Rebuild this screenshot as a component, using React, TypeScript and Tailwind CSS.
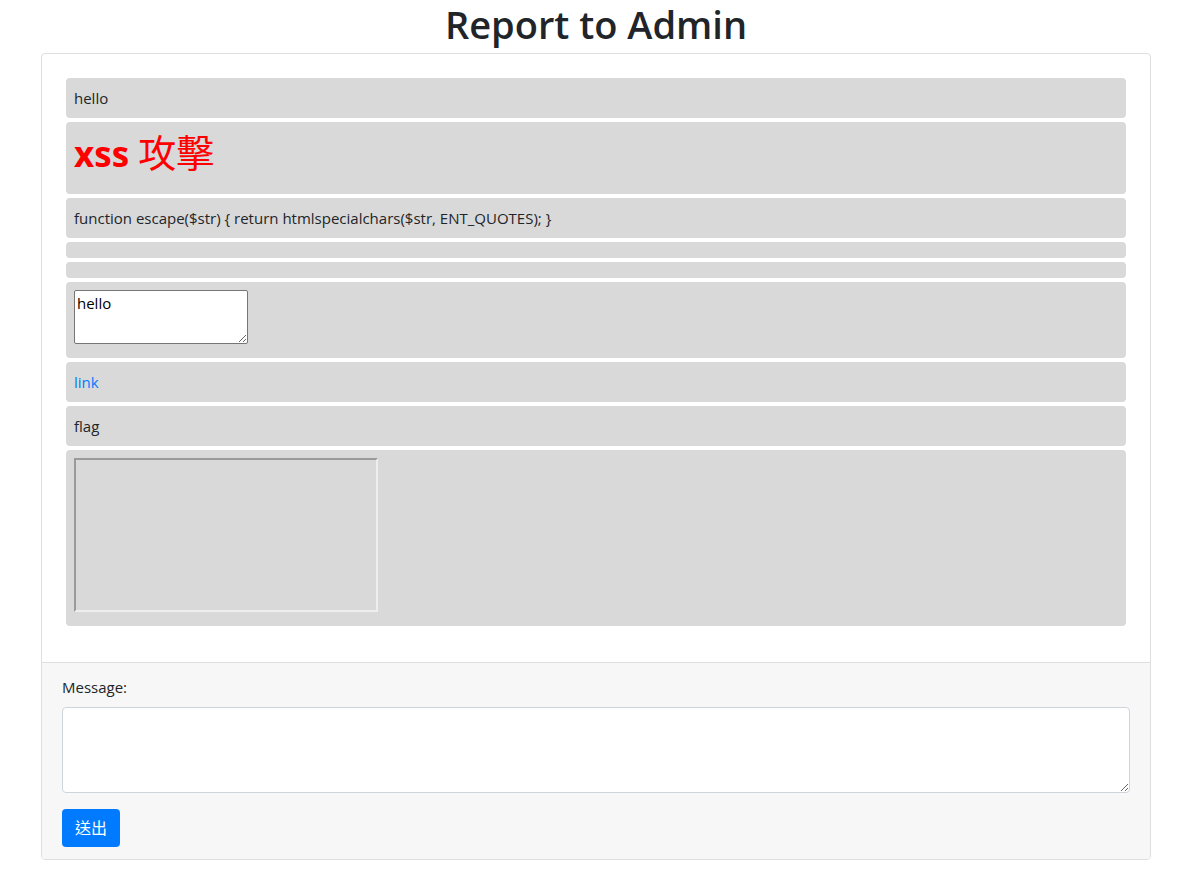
import React from 'react';

const font = { fontFamily: '"Open Sans", "Noto Sans CJK TC", sans-serif' };

const Row = ({ children, className = "" }: any) => (
    <div className={"bg-[#d9d9d9] rounded-[4px] px-2 pt-2 " + className}>
        {children}
    </div>
);

const App = () => {
    return (
        <div className="min-h-[880px] bg-white text-[#212529] text-[15px] leading-6" style={font}>
            <div className="w-[1140px] mx-auto px-[15px]">
                <h1 className="text-center text-[38px] leading-[48px] font-semibold mb-[5px]">Report to Admin</h1>
                <div className="border border-[#dfdfdf] rounded-[4px] overflow-hidden">
                    <div className="px-6 pt-6 pb-9 flex flex-col gap-1">
                        <Row className="pb-2">hello</Row>
                        <Row className="pb-2">
                            <h1 className="h-[48px] text-[35px] leading-[48px] font-bold text-[#ff0000] mb-2">
                                xss <span className="font-normal text-[38px] leading-[40px]">攻擊</span>
                            </h1>
                        </Row>
                        <Row className="pb-2">function escape($str) {"{"} return htmlspecialchars($str, ENT_QUOTES); {"}"}</Row>
                        <Row className="pb-2"></Row>
                        <Row className="pb-2"></Row>
                        <Row className="pb-[14px]">
                            <textarea
                                defaultValue="hello"
                                className="block w-[174px] h-[54px] bg-white border border-[#767676] rounded-[2px] px-[2px] py-[2px] text-[15px] leading-5 text-black resize-y"
                            />
                        </Row>
                        <Row className="pb-2">
                            <a href="#" className="text-[#007bff]">link</a>
                        </Row>
                        <Row className="pb-2">flag</Row>
                        <Row className="pb-[14px]">
                            <div className="w-[304px] h-[154px] border-2 border-t-[#9a9a9a] border-l-[#9a9a9a] border-b-[#eeeeee] border-r-[#eeeeee]" />
                        </Row>
                    </div>
                    <div className="bg-[#f7f7f7] border-t border-[#dfdfdf] px-5 py-3">
                        <label className="block mb-2">Message:</label>
                        <textarea
                            rows={3}
                            className="block w-full h-[86px] bg-white border border-[#ced4da] rounded-[4px] px-3 py-[6px] resize-y"
                        />
                        <button className="mt-4 bg-[#007bff] text-white rounded-[4px] px-[13px] h-[38px] leading-6 text-[16px]">送出</button>
                    </div>
                </div>
            </div>
        </div>
    );
};

export default App;
